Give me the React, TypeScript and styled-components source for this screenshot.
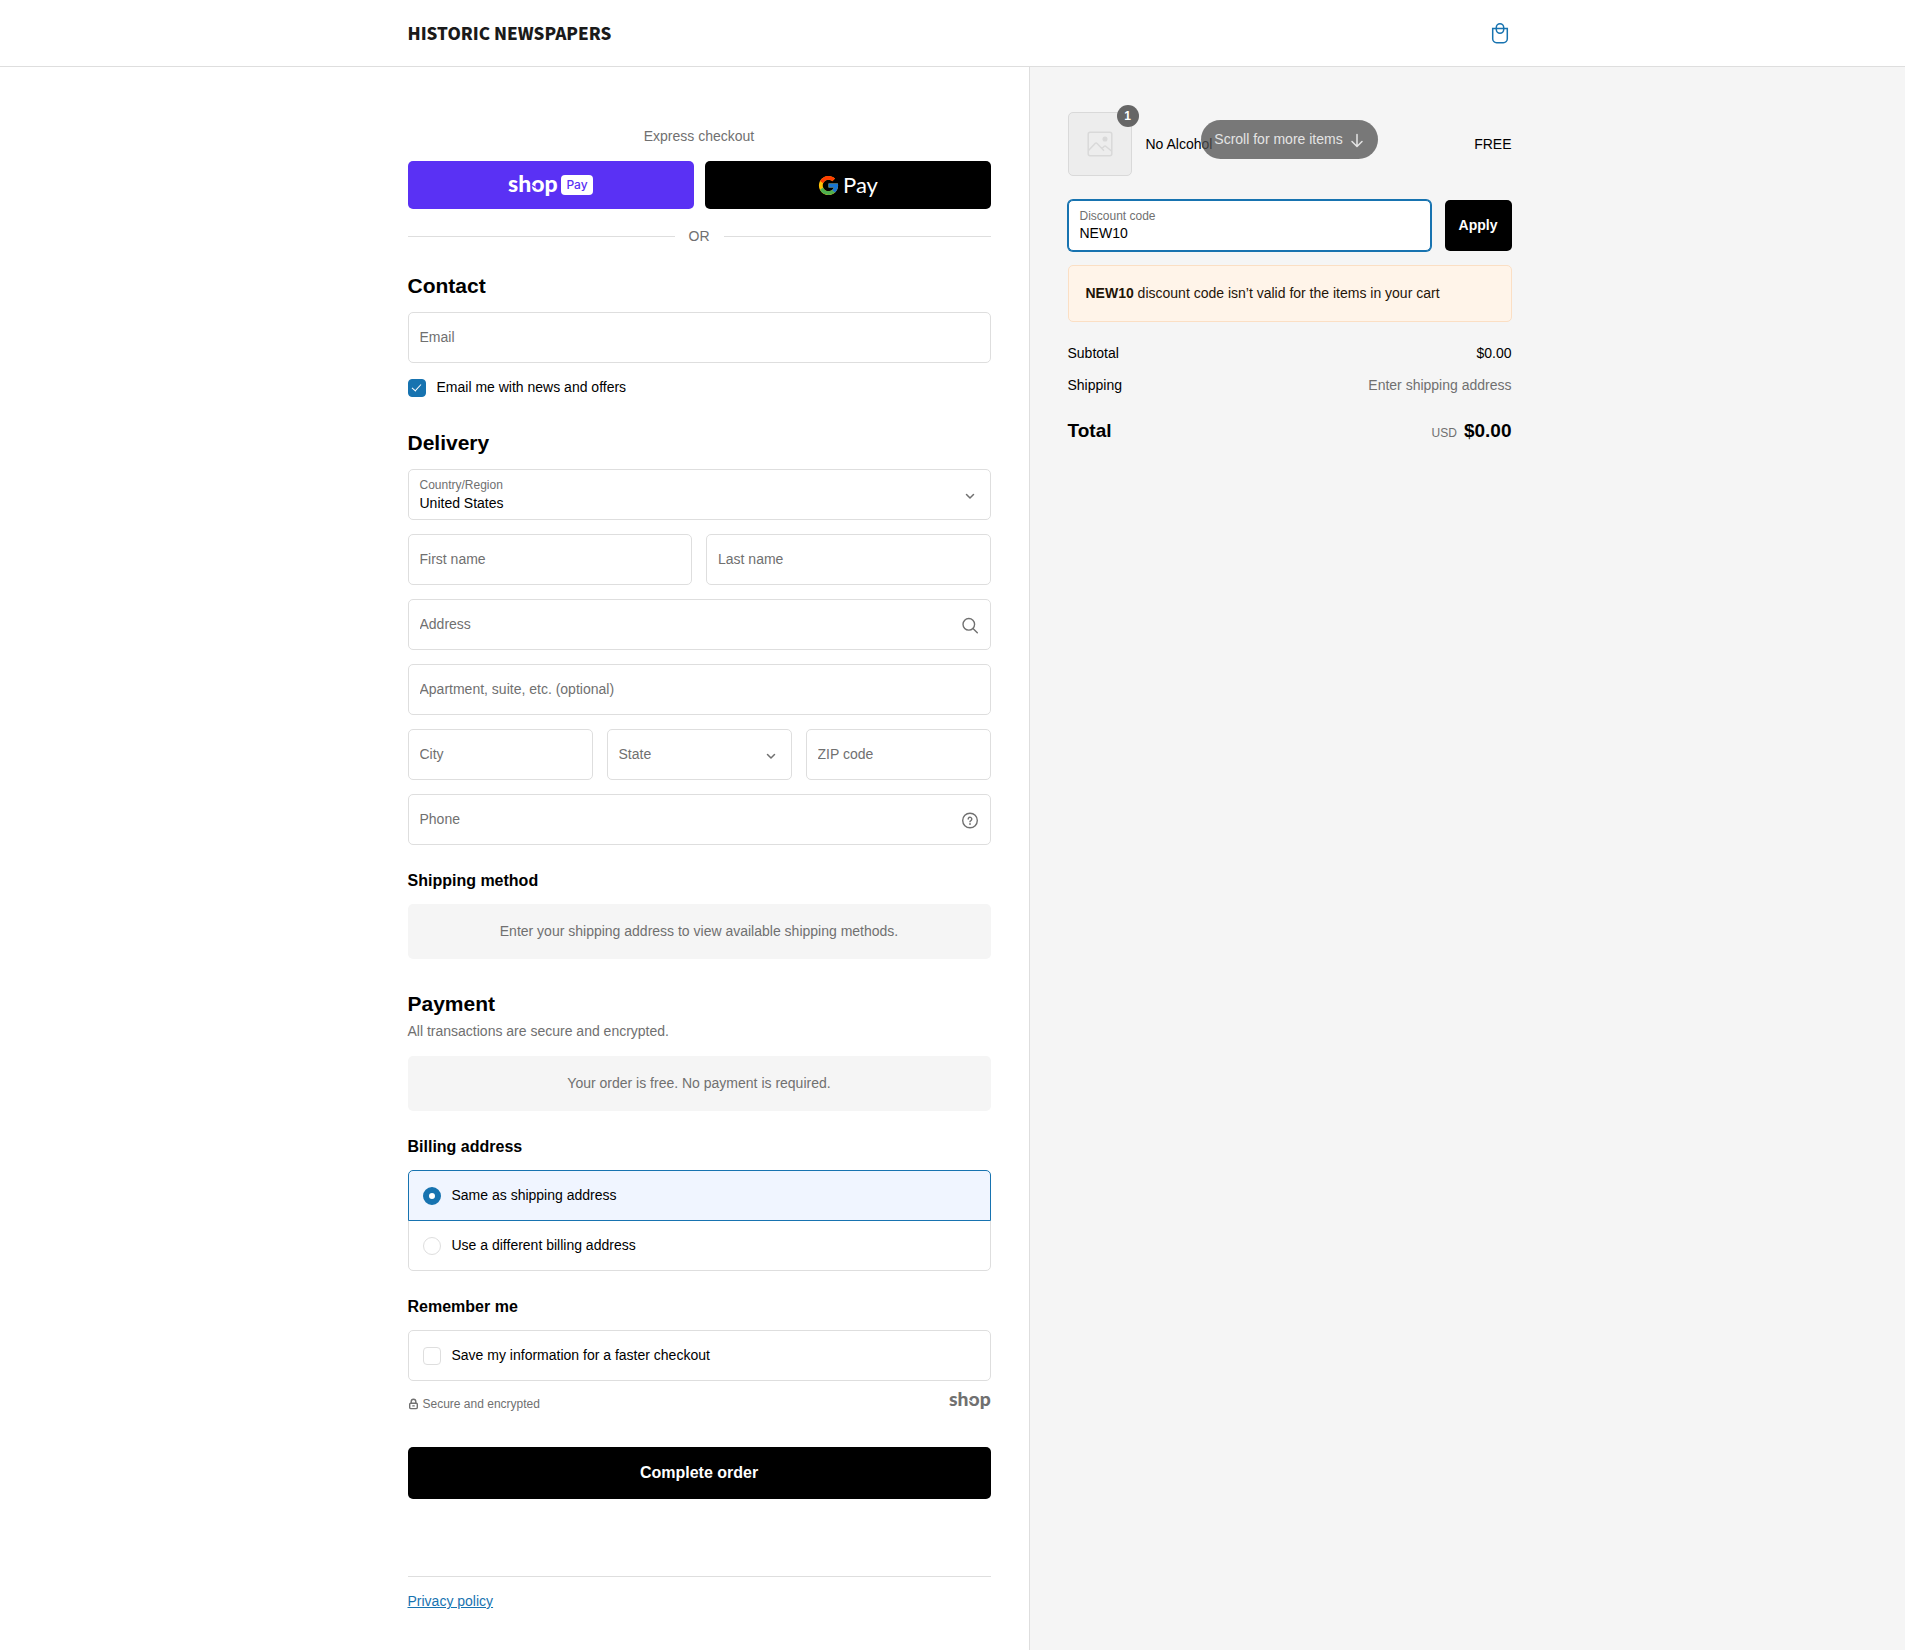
import React, { useState } from "react";
import styled, { createGlobalStyle } from "styled-components";
import { FcGoogle } from "react-icons/fc";

const color = {
  text: "#000000",
  muted: "#707070",
  line: "#dedede",
  accent: "#1773b0",
  panel: "#f5f5f5",
};

const GlobalStyle = createGlobalStyle`
  *, *::before, *::after { box-sizing: border-box; }
  body {
    margin: 0;
    background: #ffffff;
    color: ${color.text};
    font-family: "Liberation Sans", Arial, Helvetica, sans-serif;
    font-size: 14px;
    line-height: 21px;
  }
  input, select, button { font: inherit; color: inherit; }
  h1, h2, h3, p { margin: 0; }
`;

const Page = styled.div`
  display: flex;
  flex-direction: column;
  min-height: 100vh;
`;

const Split = styled.div`
  display: grid;
  grid-template-columns: calc(50% + 76px) 1fr;
`;

const Header = styled.header`
  border-bottom: 1px solid ${color.line};
`;

const HeaderStart = styled.div`
  display: flex;
  justify-content: flex-end;
  padding: 0 38px;
`;

const HeaderStartInner = styled.div`
  display: flex;
  align-items: center;
  width: 100%;
  max-width: 583px;
  height: 66px;
`;

const HeaderEnd = styled.div`
  display: flex;
  padding: 0 38px;
`;

const HeaderEndInner = styled.div`
  display: flex;
  align-items: center;
  justify-content: flex-end;
  width: 100%;
  max-width: 445px;
`;

const Brand = styled.a`
  color: #1a1a1a;
  font-family: "Noto Sans CJK JP", "Liberation Sans", Arial, sans-serif;
  font-size: 17px;
  font-weight: 900;
  line-height: 24px;
  text-decoration: none;
  white-space: nowrap;
`;

const BagLink = styled.a`
  display: flex;
  color: ${color.accent};
`;

const Body = styled(Split)`
  flex: 1;
`;

const MainColumn = styled.main`
  display: flex;
  justify-content: flex-end;
  padding: 59px 38px 38px;
`;

const MainInner = styled.div`
  width: 100%;
  max-width: 583px;
`;

const Aside = styled.aside`
  padding: 45px 38px 38px;
  border-left: 1px solid ${color.line};
  background: ${color.panel};
`;

const AsideInner = styled.div`
  max-width: 444px;
`;

const ExpressTitle = styled.h2`
  margin-bottom: 14px;
  color: ${color.muted};
  font-size: 14px;
  font-weight: 400;
  line-height: 21px;
  text-align: center;
`;

const ExpressRow = styled.div`
  display: grid;
  grid-template-columns: 1fr 1fr;
  gap: 11px;
`;

const WalletButton = styled.button<{ $bg: string }>`
  display: flex;
  align-items: center;
  justify-content: center;
  gap: 3px;
  height: 48px;
  padding: 0;
  border: 0;
  border-radius: 5px;
  background: ${(p) => p.$bg};
  color: #ffffff;
  cursor: pointer;
`;

const PayTag = styled.span`
  padding: 0 5px;
  border-radius: 4px;
  background: #ffffff;
  color: #5a31f4;
  font-family: Inter, sans-serif;
  font-size: 12px;
  font-weight: 500;
  line-height: 20px;
`;

const GooglePayText = styled.span`
  font-family: Lato, sans-serif;
  font-size: 22px;
  line-height: 28px;
`;

const Divider = styled.div`
  display: flex;
  align-items: center;
  gap: 14px;
  margin: 17px 0 26px;
  color: ${color.muted};

  &::before,
  &::after {
    content: "";
    flex: 1;
    height: 1px;
    background: ${color.line};
  }
`;

const Section = styled.section`
  & + & {
    margin-top: 32px;
  }
`;

const SubSection = styled.section`
  margin-top: 26px;
`;

const Title = styled.h2`
  font-size: 21px;
  font-weight: 700;
  line-height: 25px;
`;

const SubTitle = styled.h3`
  margin-bottom: 14px;
  font-size: 16px;
  font-weight: 700;
  line-height: 19px;
`;

const Note = styled.p`
  margin-top: 5px;
  color: ${color.muted};
`;

const Stack = styled.div`
  display: grid;
  gap: 14px;
  margin-top: 14px;
`;

const Row = styled.div<{ $columns: number }>`
  display: grid;
  grid-template-columns: repeat(${(p) => p.$columns}, minmax(0, 1fr));
  gap: 14px;
`;

const FieldBox = styled.div<{ $focused?: boolean }>`
  display: flex;
  align-items: center;
  gap: 8px;
  min-width: 0;
  height: 51px;
  padding: 0 11px;
  border: 1px solid ${(p) => (p.$focused ? color.accent : color.line)};
  border-radius: 5px;
  background: #ffffff;
  box-shadow: ${(p) => (p.$focused ? `0 0 0 1px ${color.accent}` : "none")};
  color: ${color.muted};
`;

const FieldText = styled.div`
  display: flex;
  flex: 1;
  flex-direction: column;
  min-width: 0;
`;

const FloatingLabel = styled.label`
  padding-top: 1px;
  font-size: 12px;
  line-height: 15px;
`;

/* The label shares one grid cell with its control and shows while it is empty. */
const OverlapCell = styled.div`
  display: grid;
  flex: 1;
  align-self: flex-start;
  min-width: 0;

  > * {
    grid-area: 1 / 1;
  }
`;

const RestingLabel = styled.label`
  overflow: hidden;
  line-height: 48px;
  pointer-events: none;
  text-overflow: ellipsis;
  white-space: nowrap;
`;

const TextInput = styled.input<{ $compact?: boolean }>`
  width: 100%;
  height: ${(p) => (p.$compact ? 19 : 48)}px;
  padding: 0;
  border: 0;
  outline: 0;
  background: transparent;
  color: ${color.text};

  &:not(:placeholder-shown) + ${RestingLabel} {
    visibility: hidden;
  }
`;

const SelectInput = styled.select<{ $compact?: boolean }>`
  width: 100%;
  height: ${(p) => (p.$compact ? 19 : 48)}px;
  padding: 0 0 ${(p) => (p.$compact ? 2 : 0)}px;
  border: 0;
  outline: 0;
  appearance: none;
  background: transparent;
  color: ${color.text};
`;

const CheckLine = styled.label`
  display: flex;
  align-items: center;
  gap: 11px;
  color: ${color.text};
`;

const CheckInput = styled.input`
  flex: none;
  display: grid;
  place-items: center;
  width: 18px;
  height: 18px;
  margin: 0;
  border: 1px solid ${color.line};
  border-radius: 4px;
  appearance: none;
  background: #ffffff;

  &:checked {
    border-color: ${color.accent};
    background: ${color.accent};
  }

  &:checked::before {
    content: "";
    width: 5px;
    height: 9px;
    margin-bottom: 2px;
    border: solid #ffffff;
    border-width: 0 1px 1px 0;
    transform: rotate(42deg);
  }
`;

const RadioInput = styled.input`
  flex: none;
  width: 18px;
  height: 18px;
  margin: 0;
  border: 1px solid ${color.line};
  border-radius: 50%;
  appearance: none;
  background: #ffffff;

  &:checked {
    border: 6px solid ${color.accent};
  }
`;

const ChoiceGroup = styled.div`
  display: grid;
`;

const Choice = styled.label<{ $selected?: boolean }>`
  display: flex;
  align-items: center;
  gap: 11px;
  height: 51px;
  padding: 0 14px;
  border: 1px solid ${(p) => (p.$selected ? color.accent : color.line)};
  background: ${(p) => (p.$selected ? "#f0f5ff" : "#ffffff")};
  z-index: ${(p) => (p.$selected ? 1 : 0)};

  &:first-child {
    border-top-left-radius: 5px;
    border-top-right-radius: 5px;
  }
  &:last-child {
    border-bottom-left-radius: 5px;
    border-bottom-right-radius: 5px;
  }
  & + & {
    margin-top: -1px;
  }
`;

const Notice = styled.p`
  padding: 17px;
  border-radius: 5px;
  background: ${color.panel};
  color: ${color.muted};
  text-align: center;
`;

const PaymentNotice = styled(Notice)`
  margin-top: 14px;
`;

const SecureRow = styled.div`
  display: flex;
  align-items: flex-end;
  justify-content: space-between;
  height: 24px;
  margin-top: 8px;
  color: ${color.muted};
`;

const SecureText = styled.span`
  display: flex;
  align-items: center;
  gap: 4px;
  font-size: 12px;
  line-height: 18px;
`;

const ShopMark = styled.span`
  display: flex;
  align-self: flex-start;
`;

const SubmitButton = styled.button`
  width: 100%;
  height: 52px;
  margin-top: 34px;
  padding: 0 0 2px;
  border: 0;
  border-radius: 5px;
  background: #000000;
  color: #ffffff;
  font-size: 16px;
  font-weight: 700;
  cursor: pointer;
`;

const Footer = styled.footer`
  margin-top: 77px;
  padding-top: 14px;
  border-top: 1px solid ${color.line};
`;

const FooterLink = styled.a`
  color: ${color.accent};
  text-decoration: underline;
`;

const ItemList = styled.div`
  position: relative;
`;

const Item = styled.div`
  display: flex;
  align-items: center;
  gap: 14px;
`;

const Thumb = styled.div`
  position: relative;
  display: flex;
  align-items: center;
  justify-content: center;
  width: 64px;
  height: 64px;
  border: 1px solid #d9d9d9;
  border-radius: 5px;
  background: #ededed;
  color: #d9d9d9;
`;

const Count = styled.span`
  position: absolute;
  top: -8px;
  right: -8px;
  width: 22px;
  height: 22px;
  border-radius: 50%;
  background: #666666;
  color: #ffffff;
  font-size: 12px;
  font-weight: 700;
  line-height: 22px;
  text-align: center;
`;

const ItemName = styled.span`
  flex: 1;
`;

const ScrollHint = styled.div`
  position: absolute;
  top: 8px;
  right: 0;
  left: 0;
  display: flex;
  justify-content: center;
`;

const ScrollButton = styled.button`
  display: flex;
  align-items: center;
  gap: 6px;
  height: 39px;
  padding: 0 13px;
  border: 0;
  border-radius: 20px;
  background: rgba(80, 80, 80, 0.76);
  color: #e4e4e4;
  white-space: nowrap;
`;

const DiscountRow = styled.form`
  display: grid;
  grid-template-columns: minmax(0, 1fr) 67px;
  gap: 14px;
  margin-top: 24px;
`;

const ApplyButton = styled.button`
  padding: 0;
  border: 0;
  border-radius: 5px;
  background: #000000;
  color: #ffffff;
  font-weight: 700;
`;

const Warning = styled.p`
  margin-top: 14px;
  padding: 17px;
  border: 1px solid #fbdfc4;
  border-radius: 5px;
  background: #fff4e9;
  color: #1f1508;
`;

const Totals = styled.dl`
  display: grid;
  gap: 11px;
  margin: 21px 0 0;
`;

const TotalLine = styled.div`
  display: flex;
  justify-content: space-between;

  dd {
    margin: 0;
  }
`;

const Pending = styled.dd`
  color: ${color.muted};
`;

const GrandTotal = styled(TotalLine)`
  align-items: baseline;
  margin-top: 10px;
  font-size: 19px;
  font-weight: 700;
  line-height: 28px;
`;

const Currency = styled.span`
  margin-right: 7px;
  color: ${color.muted};
  font-size: 12px;
  font-weight: 400;
`;

function ShopLogo({ width, height, notch }: { width: number; height: number; notch: string }) {
  return (
    <svg width={width} height={height} viewBox="0 0 50 26" overflow="visible" role="img" aria-label="shop">
      <text x="0" y="20" fill="currentColor" fontFamily="Lato, sans-serif" fontSize="23" fontWeight="900">
        shop
      </text>
      <path d="M22.5 12.5l5 3" stroke={notch} strokeWidth="1.4" />
    </svg>
  );
}

function BagIcon() {
  return (
    <svg width="24" height="24" viewBox="0 0 24 24" fill="none" stroke="currentColor" strokeWidth="1.5" aria-hidden="true">
      <path d="M4.7 7.5h14.6v10.3a3.9 3.9 0 0 1-3.9 3.9H8.6a3.9 3.9 0 0 1-3.9-3.9z" />
      <rect x="8.3" y="2.7" width="7.4" height="9.6" rx="3.7" />
    </svg>
  );
}

function ChevronIcon() {
  return (
    <svg width="18" height="18" viewBox="0 0 18 18" fill="none" stroke="currentColor" strokeWidth="1.5" strokeLinecap="round" strokeLinejoin="round" aria-hidden="true">
      <path d="M5.5 8.5l3.5 3.5 3.5-3.5" />
    </svg>
  );
}

function SearchIcon() {
  return (
    <svg width="18" height="18" viewBox="0 0 18 18" fill="none" stroke="currentColor" strokeWidth="1.4" strokeLinecap="round" aria-hidden="true">
      <circle cx="7.8" cy="8.3" r="5.8" />
      <path d="M12 12.5l4.3 4.3" />
    </svg>
  );
}

function HelpIcon() {
  return (
    <svg width="18" height="18" viewBox="0 0 18 18" fill="none" stroke="currentColor" strokeWidth="1.4" strokeLinecap="round" strokeLinejoin="round" aria-hidden="true">
      <circle cx="9" cy="9.5" r="7.3" />
      <path d="M7.2 8a1.8 1.8 0 1 1 2.7 1.6c-.6.3-.9.6-.9 1.2" />
      <circle cx="9" cy="12.9" r=".3" />
    </svg>
  );
}

function LockIcon() {
  return (
    <svg width="11" height="12" viewBox="0 0 11 12" fill="none" stroke="currentColor" strokeWidth="1.4" strokeLinejoin="round" aria-hidden="true">
      <rect x="1.7" y="5.2" width="7.6" height="5.4" rx="1" />
      <path d="M3.2 5V3.6a2.3 2.3 0 0 1 4.6 0V5M4.3 7.9h2.4" />
    </svg>
  );
}

function PictureIcon() {
  return (
    <svg width="26" height="26" viewBox="0 0 26 26" fill="none" stroke="currentColor" strokeWidth="1.5" strokeLinejoin="round" aria-hidden="true">
      <rect x="1.2" y="1.2" width="23.6" height="23.6" rx="2" />
      <path d="M1.5 19.5l6.6-7c.6-.6 1.4-.6 2 0l6.9 7.2M15 17.5l2-2c.6-.6 1.4-.6 2 0l5.5 4.5" />
      <circle cx="18" cy="8" r="1.8" fill="currentColor" />
    </svg>
  );
}

function ArrowDownIcon() {
  return (
    <svg width="16" height="16" viewBox="0 0 16 16" fill="none" stroke="currentColor" strokeWidth="1.5" strokeLinecap="round" strokeLinejoin="round" aria-hidden="true">
      <path d="M8 2.5v11.8M3 9.5l5 5 5-5" />
    </svg>
  );
}

function TextField({ id, label, icon }: { id: string; label: string; icon?: React.ReactNode }) {
  return (
    <FieldBox>
      <OverlapCell>
        <TextInput id={id} type="text" placeholder=" " />
        <RestingLabel htmlFor={id}>{label}</RestingLabel>
      </OverlapCell>
      {icon}
    </FieldBox>
  );
}

export default function App() {
  const [news, setNews] = useState(true);
  const [save, setSave] = useState(false);
  const [billing, setBilling] = useState("same");
  const [state, setState] = useState("");
  const [code, setCode] = useState("NEW10");

  return (
    <Page>
      <GlobalStyle />
      <Header>
        <Split>
          <HeaderStart>
            <HeaderStartInner>
              <Brand href="#">HISTORIC NEWSPAPERS</Brand>
            </HeaderStartInner>
          </HeaderStart>
          <HeaderEnd>
            <HeaderEndInner>
              <BagLink href="#" aria-label="Cart">
                <BagIcon />
              </BagLink>
            </HeaderEndInner>
          </HeaderEnd>
        </Split>
      </Header>

      <Body>
        <MainColumn>
          <MainInner>
            <ExpressTitle>Express checkout</ExpressTitle>
            <ExpressRow>
              <WalletButton type="button" $bg="#5a31f4" aria-label="Shop Pay">
                <ShopLogo width={50} height={26} notch="#5a31f4" />
                <PayTag>Pay</PayTag>
              </WalletButton>
              <WalletButton type="button" $bg="#000000" aria-label="Google Pay">
                <FcGoogle size={23} />
                <GooglePayText>Pay</GooglePayText>
              </WalletButton>
            </ExpressRow>
            <Divider>OR</Divider>

            <Section>
              <Title>Contact</Title>
              <Stack>
                <TextField id="email" label="Email" />
                <CheckLine>
                  <CheckInput type="checkbox" checked={news} onChange={(e) => setNews(e.target.checked)} />
                  Email me with news and offers
                </CheckLine>
              </Stack>
            </Section>

            <Section>
              <Title>Delivery</Title>
              <Stack>
                <FieldBox>
                  <FieldText>
                    <FloatingLabel htmlFor="country">Country/Region</FloatingLabel>
                    <SelectInput id="country" $compact defaultValue="US">
                      <option value="US">United States</option>
                    </SelectInput>
                  </FieldText>
                  <ChevronIcon />
                </FieldBox>
                <Row $columns={2}>
                  <TextField id="first-name" label="First name" />
                  <TextField id="last-name" label="Last name" />
                </Row>
                <TextField id="address" label="Address" icon={<SearchIcon />} />
                <TextField id="apartment" label="Apartment, suite, etc. (optional)" />
                <Row $columns={3}>
                  <TextField id="city" label="City" />
                  <FieldBox>
                    <OverlapCell>
                      <SelectInput id="state" value={state} onChange={(e) => setState(e.target.value)}>
                        <option value="" />
                        <option value="NY">New York</option>
                      </SelectInput>
                      {!state && <RestingLabel htmlFor="state">State</RestingLabel>}
                    </OverlapCell>
                    <ChevronIcon />
                  </FieldBox>
                  <TextField id="zip" label="ZIP code" />
                </Row>
                <TextField id="phone" label="Phone" icon={<HelpIcon />} />
              </Stack>
              <SubSection>
                <SubTitle>Shipping method</SubTitle>
                <Notice>Enter your shipping address to view available shipping methods.</Notice>
              </SubSection>
            </Section>

            <Section>
              <Title>Payment</Title>
              <Note>All transactions are secure and encrypted.</Note>
              <PaymentNotice>Your order is free. No payment is required.</PaymentNotice>
              <SubSection>
                <SubTitle>Billing address</SubTitle>
                <ChoiceGroup role="radiogroup" aria-label="Billing address">
                  <Choice $selected={billing === "same"}>
                    <RadioInput type="radio" name="billing" checked={billing === "same"} onChange={() => setBilling("same")} />
                    Same as shipping address
                  </Choice>
                  <Choice $selected={billing === "other"}>
                    <RadioInput type="radio" name="billing" checked={billing === "other"} onChange={() => setBilling("other")} />
                    Use a different billing address
                  </Choice>
                </ChoiceGroup>
              </SubSection>
              <SubSection>
                <SubTitle>Remember me</SubTitle>
                <ChoiceGroup>
                  <Choice>
                    <CheckInput type="checkbox" checked={save} onChange={(e) => setSave(e.target.checked)} />
                    Save my information for a faster checkout
                  </Choice>
                </ChoiceGroup>
                <SecureRow>
                  <SecureText>
                    <LockIcon />
                    Secure and encrypted
                  </SecureText>
                  <ShopMark>
                    <ShopLogo width={42} height={22} notch="#ffffff" />
                  </ShopMark>
                </SecureRow>
              </SubSection>
            </Section>

            <SubmitButton type="button">Complete order</SubmitButton>
            <Footer>
              <FooterLink href="#">Privacy policy</FooterLink>
            </Footer>
          </MainInner>
        </MainColumn>

        <Aside>
          <AsideInner>
            <ItemList>
              <Item>
                <Thumb>
                  <PictureIcon />
                  <Count>1</Count>
                </Thumb>
                <ItemName>No Alcohol</ItemName>
                <span>FREE</span>
              </Item>
              <ScrollHint>
                <ScrollButton type="button">
                  Scroll for more items
                  <ArrowDownIcon />
                </ScrollButton>
              </ScrollHint>
            </ItemList>

            <DiscountRow onSubmit={(e) => e.preventDefault()}>
              <FieldBox $focused>
                <FieldText>
                  <FloatingLabel htmlFor="discount">Discount code</FloatingLabel>
                  <TextInput id="discount" type="text" $compact value={code} onChange={(e) => setCode(e.target.value)} />
                </FieldText>
              </FieldBox>
              <ApplyButton type="submit">Apply</ApplyButton>
            </DiscountRow>

            <Warning>
              <strong>NEW10</strong> discount code isn’t valid for the items in your cart
            </Warning>

            <Totals>
              <TotalLine>
                <dt>Subtotal</dt>
                <dd>$0.00</dd>
              </TotalLine>
              <TotalLine>
                <dt>Shipping</dt>
                <Pending>Enter shipping address</Pending>
              </TotalLine>
              <GrandTotal>
                <dt>Total</dt>
                <dd>
                  <Currency>USD</Currency>
                  $0.00
                </dd>
              </GrandTotal>
            </Totals>
          </AsideInner>
        </Aside>
      </Body>
    </Page>
  );
}
